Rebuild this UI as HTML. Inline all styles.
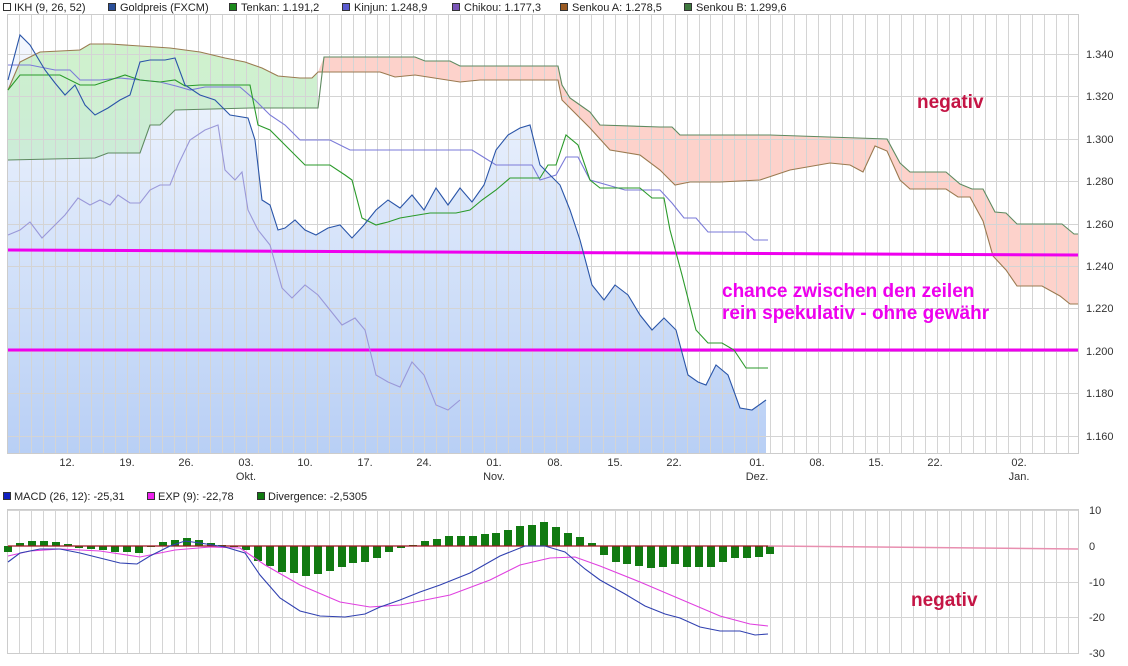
<!DOCTYPE html>
<html><head><meta charset="utf-8"><style>
html,body{margin:0;padding:0;background:#fff;}
svg{display:block;font-family:"Liberation Sans",sans-serif;}
</style></head><body>
<svg width="1128" height="666" viewBox="0 0 1128 666" xmlns="http://www.w3.org/2000/svg">
<defs>
<linearGradient id="bg" x1="0" y1="0" x2="0" y2="1" gradientUnits="userSpaceOnUse" x1a="0">
</linearGradient>
<linearGradient id="blu" gradientUnits="userSpaceOnUse" x1="0" y1="40" x2="0" y2="453">
<stop offset="0" stop-color="#f3f7fe"/><stop offset="1" stop-color="#b8cff5"/></linearGradient>
<linearGradient id="grn" gradientUnits="userSpaceOnUse" x1="0" y1="40" x2="0" y2="160">
<stop offset="0" stop-color="#c6efc2"/><stop offset="1" stop-color="#c8ecd2"/></linearGradient>
</defs>
<!-- top legend -->
<g font-size="11" fill="#222">
<rect x="3.5" y="3.5" width="7" height="7" fill="#fff" stroke="#333"/><text x="14" y="11">IKH (9, 26, 52)</text>
<rect x="108.5" y="3.5" width="7" height="7" fill="#2a4f9a" stroke="#333"/><text x="120" y="11">Goldpreis (FXCM)</text>
<rect x="229.5" y="3.5" width="7" height="7" fill="#1b8a1b" stroke="#333"/><text x="241" y="11">Tenkan: 1.191,2</text>
<rect x="342.5" y="3.5" width="7" height="7" fill="#5b5bd0" stroke="#333"/><text x="354" y="11">Kinjun: 1.248,9</text>
<rect x="452.5" y="3.5" width="7" height="7" fill="#7a55b8" stroke="#333"/><text x="464" y="11">Chikou: 1.177,3</text>
<rect x="560.5" y="3.5" width="7" height="7" fill="#9a5a22" stroke="#333"/><text x="572" y="11">Senkou A: 1.278,5</text>
<rect x="684.5" y="3.5" width="7" height="7" fill="#3f7a3f" stroke="#333"/><text x="696" y="11">Senkou B: 1.299,6</text>
</g>
<!-- price fill -->
<polygon fill="url(#blu)" points="8,80 20,35 30,45 45,70 55,83 65,95 75,85 85,105 95,115 108,108 120,100 130,95 140,62 150,60 165,60 175,58 185,85 200,95 215,100 230,115 248,118 255,140 262,200 270,205 278,230 285,228 295,220 305,230 316,235 328,228 340,225 352,238 364,225 376,210 388,200 400,208 412,195 424,210 436,188 448,205 460,188 472,202 484,185 496,150 508,135 520,128 530,125 540,165 550,175 560,185 570,210 580,240 592,285 604,300 615,285 628,295 640,315 652,330 664,318 676,330 688,375 698,382 706,385 716,365 728,375 740,408 752,410 766,400 766,453 8,453"/>
<!-- green cloud -->
<polygon fill="url(#grn)" fill-opacity="0.85" points="8,90 20,62 40,52 80,50 90,44 110,44 140,46 170,48 200,52 225,58 245,62 262,68 278,76 300,78 312,78 318,72 318,108 250,108 175,110 160,125 150,125 140,153 108,153 95,158 8,160"/>
<!-- red cloud -->
<polygon fill="#fdd2cb" points="318,72 324,57 415,57 425,61 450,61 460,66 558,66 562,85 570,98 580,105 590,112 600,125 660,127 672,127 680,135 770,135 887,139 900,163 910,172 946,172 960,184 972,189 983,189 995,212 1006,213 1017,224 1062,224 1074,234 1078,234 1078,304 1070,304 1060,296 1042,286 1017,286 1006,270 993,256 983,221 970,197 958,197 946,189 910,189 900,180 887,151 875,146 863,172 850,165 830,163 790,170 760,180 720,182 690,182 675,185 660,170 640,155 610,150 590,128 570,108 562,100 558,80 480,80 460,82 415,75 395,77 380,72"/>
<!-- grid -->
<g stroke="#d4d4d4" stroke-width="1">
<path d="M19.5 15V453M31.5 15V453M43.5 15V453M55.5 15V453M67.5 15V453M79.5 15V453M91.5 15V453M103.5 15V453M115.5 15V453M127.5 15V453M139.5 15V453M150.5 15V453M162.5 15V453M174.5 15V453M186.5 15V453M198.5 15V453M210.5 15V453M222.5 15V453M234.5 15V453M246.5 15V453M258.5 15V453M270.5 15V453M282.5 15V453M293.5 15V453M305.5 15V453M317.5 15V453M329.5 15V453M341.5 15V453M353.5 15V453M365.5 15V453M377.5 15V453M389.5 15V453M401.5 15V453M413.5 15V453M424.5 15V453M436.5 15V453M448.5 15V453M460.5 15V453M472.5 15V453M484.5 15V453M496.5 15V453M508.5 15V453M520.5 15V453M532.5 15V453M544.5 15V453M556.5 15V453M567.5 15V453M579.5 15V453M591.5 15V453M603.5 15V453M615.5 15V453M627.5 15V453M639.5 15V453M651.5 15V453M663.5 15V453M675.5 15V453M687.5 15V453M699.5 15V453M710.5 15V453M722.5 15V453M734.5 15V453M746.5 15V453M758.5 15V453M770.5 15V453M782.5 15V453M794.5 15V453M806.5 15V453M818.5 15V453M830.5 15V453M842.5 15V453M853.5 15V453M865.5 15V453M877.5 15V453M889.5 15V453M901.5 15V453M913.5 15V453M925.5 15V453M937.5 15V453M949.5 15V453M961.5 15V453M973.5 15V453M985.5 15V453M996.5 15V453M1008.5 15V453M1020.5 15V453M1032.5 15V453M1044.5 15V453M1056.5 15V453M1068.5 15V453"/>
<path d="M8 54.5H1078M8 96.5H1078M8 139.5H1078M8 181.5H1078M8 224.5H1078M8 266.5H1078M8 308.5H1078M8 351.5H1078M8 393.5H1078M8 436.5H1078"/>
<path d="M19.5 510V653M31.5 510V653M43.5 510V653M55.5 510V653M67.5 510V653M79.5 510V653M91.5 510V653M103.5 510V653M115.5 510V653M127.5 510V653M139.5 510V653M150.5 510V653M162.5 510V653M174.5 510V653M186.5 510V653M198.5 510V653M210.5 510V653M222.5 510V653M234.5 510V653M246.5 510V653M258.5 510V653M270.5 510V653M282.5 510V653M293.5 510V653M305.5 510V653M317.5 510V653M329.5 510V653M341.5 510V653M353.5 510V653M365.5 510V653M377.5 510V653M389.5 510V653M401.5 510V653M413.5 510V653M424.5 510V653M436.5 510V653M448.5 510V653M460.5 510V653M472.5 510V653M484.5 510V653M496.5 510V653M508.5 510V653M520.5 510V653M532.5 510V653M544.5 510V653M556.5 510V653M567.5 510V653M579.5 510V653M591.5 510V653M603.5 510V653M615.5 510V653M627.5 510V653M639.5 510V653M651.5 510V653M663.5 510V653M675.5 510V653M687.5 510V653M699.5 510V653M710.5 510V653M722.5 510V653M734.5 510V653M746.5 510V653M758.5 510V653M770.5 510V653M782.5 510V653M794.5 510V653M806.5 510V653M818.5 510V653M830.5 510V653M842.5 510V653M853.5 510V653M865.5 510V653M877.5 510V653M889.5 510V653M901.5 510V653M913.5 510V653M925.5 510V653M937.5 510V653M949.5 510V653M961.5 510V653M973.5 510V653M985.5 510V653M996.5 510V653M1008.5 510V653M1020.5 510V653M1032.5 510V653M1044.5 510V653M1056.5 510V653M1068.5 510V653"/>
<path d="M8 510.5H1078M8 582.5H1078M8 617.5H1078"/>
</g>
<rect x="7.5" y="14.5" width="1071" height="439" fill="none" stroke="#ccc"/>
<rect x="7.5" y="509.5" width="1071" height="144" fill="none" stroke="#ccc"/>
<!-- cloud outlines -->
<g fill="none" stroke-width="1.1">
<polyline stroke="#9a7a50" points="8,90 20,62 40,52 80,50 90,44 110,44 140,46 170,48 200,52 225,58 245,62 262,68 278,76 300,78 312,78 318,72 380,72 395,77 415,75 460,82 480,80 558,80 562,100 570,108 590,128 610,150 640,155 660,170 675,185 690,182 720,182 760,180 790,170 830,163 850,165 863,172 875,146 887,151 900,180 910,189 946,189 958,197 970,197 983,221 993,256 1006,270 1017,286 1042,286 1060,296 1070,304 1078,304"/>
<polyline stroke="#5e8a60" points="8,160 95,158 108,153 140,153 150,125 160,125 175,110 250,108 318,108 324,57 415,57 425,61 450,61 460,66 558,66 562,85 570,98 580,105 590,112 600,125 660,127 672,127 680,135 770,135 887,139 900,163 910,172 946,172 960,184 972,189 983,189 995,212 1006,213 1017,224 1062,224 1074,234 1078,234"/>
</g>
<!-- magenta lines -->
<line x1="8" y1="250" x2="1078" y2="255" stroke="#ee00ee" stroke-width="3"/>
<line x1="8" y1="350" x2="1078" y2="350" stroke="#ee00ee" stroke-width="3"/>
<!-- series -->
<g fill="none" stroke-width="1.1">
<polyline stroke="#9a98d8" points="8,235 20,230 30,222 42,238 55,225 65,215 78,198 90,205 100,200 110,205 118,195 130,203 140,203 150,190 160,185 170,185 178,165 190,140 205,130 218,125 225,170 235,180 242,172 248,210 258,230 270,245 282,288 292,298 305,285 318,295 330,310 342,325 355,318 365,330 376,375 388,382 400,387 412,362 424,375 436,405 448,410 460,400"/>
<polyline stroke="#7a7ad8" points="8,65 30,65 55,70 70,70 80,80 100,80 120,78 140,80 160,82 176,86 190,90 205,87 240,87 255,100 270,115 285,125 300,140 330,140 340,145 350,150 472,150 480,155 496,165 532,165 540,180 556,175 566,157 578,157 590,180 625,190 660,190 672,203 684,218 696,218 708,232 745,232 754,240 768,240"/>
<polyline stroke="#2a9a2a" points="8,90 20,75 60,75 80,85 95,85 110,80 125,75 140,80 160,82 175,80 185,86 200,85 250,85 258,125 270,130 290,150 305,165 330,165 345,175 352,180 362,218 376,225 388,222 400,218 430,213 456,213 470,210 482,200 496,190 510,178 540,178 548,165 556,165 566,135 578,145 590,180 600,188 640,188 652,198 664,198 670,230 682,275 696,330 708,343 722,343 734,350 746,368 768,368"/>
<polyline stroke="#2a55a8" points="8,80 20,35 30,45 45,70 55,83 65,95 75,85 85,105 95,115 108,108 120,100 130,95 140,62 150,60 165,60 175,58 185,85 200,95 215,100 230,115 248,118 255,140 262,200 270,205 278,230 285,228 295,220 305,230 316,235 328,228 340,225 352,238 364,225 376,210 388,200 400,208 412,195 424,210 436,188 448,205 460,188 472,202 484,185 496,150 508,135 520,128 530,125 540,165 550,175 560,185 570,210 580,240 592,285 604,300 615,285 628,295 640,315 652,330 664,318 676,330 688,375 698,382 706,385 716,365 728,375 740,408 752,410 766,400"/>
</g>
<!-- y labels -->
<g font-size="11" fill="#333">
<text x="1086" y="58">1.340</text><text x="1086" y="100">1.320</text><text x="1086" y="143">1.300</text><text x="1086" y="185">1.280</text><text x="1086" y="228">1.260</text><text x="1086" y="270">1.240</text><text x="1086" y="312">1.220</text><text x="1086" y="355">1.200</text><text x="1086" y="397">1.180</text><text x="1086" y="440">1.160</text>
<text x="1089" y="514">10</text><text x="1089" y="550">0</text><text x="1089" y="586">-10</text><text x="1089" y="621">-20</text><text x="1089" y="657">-30</text>
</g>
<g font-size="11" fill="#333" text-anchor="middle">
<text x="67" y="466">12.</text><text x="127" y="466">19.</text><text x="186" y="466">26.</text><text x="246" y="466">03.</text><text x="246" y="480">Okt.</text><text x="305" y="466">10.</text><text x="365" y="466">17.</text><text x="424" y="466">24.</text><text x="494" y="466">01.</text><text x="494" y="480">Nov.</text><text x="555" y="466">08.</text><text x="615" y="466">15.</text><text x="674" y="466">22.</text><text x="757" y="466">01.</text><text x="757" y="480">Dez.</text><text x="817" y="466">08.</text><text x="876" y="466">15.</text><text x="935" y="466">22.</text><text x="1019" y="466">02.</text><text x="1019" y="480">Jan.</text>
</g>
<!-- annotations -->
<g font-weight="bold" font-size="19">
<text x="917" y="108" fill="#c41545">negativ</text>
<text x="911" y="606" fill="#c41545">negativ</text>
<text x="722" y="297" fill="#ee00ee">chance zwischen den zeilen</text>
<text x="722" y="319" fill="#ee00ee">rein spekulativ - ohne gewähr</text>
</g>
<!-- lower legend -->
<g font-size="11" fill="#222">
<rect x="3.5" y="492.5" width="7" height="7" fill="#1020c0" stroke="#333"/><text x="14" y="500">MACD (26, 12): -25,31</text>
<rect x="147.5" y="492.5" width="7" height="7" fill="#ee22ee" stroke="#333"/><text x="158" y="500">EXP (9): -22,78</text>
<rect x="257.5" y="492.5" width="7" height="7" fill="#107a10" stroke="#333"/><text x="268" y="500">Divergence: -2,5305</text>
</g>
<!-- bars -->
<g fill="#117a11">
<rect x="4" y="546" width="8" height="6"/><rect x="16" y="543" width="8" height="3"/><rect x="28" y="541" width="8" height="5"/><rect x="40" y="541" width="8" height="5"/><rect x="52" y="542" width="8" height="4"/><rect x="64" y="544" width="8" height="2"/><rect x="75" y="546" width="8" height="2"/><rect x="87" y="546" width="8" height="3"/><rect x="99" y="546" width="8" height="4"/><rect x="111" y="546" width="8" height="6"/><rect x="123" y="546" width="8" height="6"/><rect x="135" y="546" width="8" height="7"/><rect x="147" y="546" width="8" height="1"/><rect x="159" y="542" width="8" height="4"/><rect x="171" y="540" width="8" height="6"/><rect x="183" y="538" width="8" height="8"/><rect x="195" y="540" width="8" height="6"/><rect x="207" y="543" width="8" height="3"/><rect x="218" y="545" width="8" height="1"/><rect x="230" y="546" width="8" height="1"/><rect x="242" y="546" width="8" height="4"/><rect x="254" y="546" width="8" height="15"/><rect x="266" y="546" width="8" height="20"/><rect x="278" y="546" width="8" height="26"/><rect x="290" y="546" width="8" height="27"/><rect x="302" y="546" width="8" height="30"/><rect x="314" y="546" width="8" height="28"/><rect x="326" y="546" width="8" height="25"/><rect x="338" y="546" width="8" height="21"/><rect x="349" y="546" width="8" height="17"/><rect x="361" y="546" width="8" height="16"/><rect x="373" y="546" width="8" height="12"/><rect x="385" y="546" width="8" height="6"/><rect x="397" y="546" width="8" height="2"/><rect x="409" y="545" width="8" height="1"/><rect x="421" y="541" width="8" height="5"/><rect x="433" y="539" width="8" height="7"/><rect x="445" y="536" width="8" height="10"/><rect x="457" y="536" width="8" height="10"/><rect x="469" y="536" width="8" height="10"/><rect x="481" y="534" width="8" height="12"/><rect x="492" y="533" width="8" height="13"/><rect x="504" y="530" width="8" height="16"/><rect x="516" y="526" width="8" height="20"/><rect x="528" y="525" width="8" height="21"/><rect x="540" y="522" width="8" height="24"/><rect x="552" y="527" width="8" height="19"/><rect x="564" y="533" width="8" height="13"/><rect x="576" y="537" width="8" height="9"/><rect x="588" y="543" width="8" height="3"/><rect x="600" y="546" width="8" height="9"/><rect x="612" y="546" width="8" height="16"/><rect x="623" y="546" width="8" height="18"/><rect x="635" y="546" width="8" height="20"/><rect x="647" y="546" width="8" height="22"/><rect x="659" y="546" width="8" height="21"/><rect x="671" y="546" width="8" height="18"/><rect x="683" y="546" width="8" height="21"/><rect x="695" y="546" width="8" height="21"/><rect x="707" y="546" width="8" height="21"/><rect x="719" y="546" width="8" height="16"/><rect x="731" y="546" width="8" height="12"/><rect x="743" y="546" width="8" height="12"/><rect x="755" y="546" width="8" height="11"/><rect x="766" y="546" width="8" height="8"/>
</g>
<line x1="8" y1="546" x2="768" y2="546" stroke="#a01020" stroke-width="1.2"/>
<line x1="768" y1="546" x2="1078" y2="549" stroke="#e88fb0" stroke-width="1.5"/>
<g fill="none" stroke-width="1.1">
<polyline stroke="#e040e0" points="8,556 30,551 60,549 100,551 140,557 175,550 210,547 240,548 265,565 300,585 340,602 370,607 400,605 450,595 490,580 520,565 550,558 575,557 600,566 640,582 680,599 720,616 750,624 768,626"/>
<polyline stroke="#3040b0" points="8,562 20,553 40,549 60,549 80,553 100,558 120,563 137,564 150,556 170,546 185,541 200,543 225,547 245,553 260,575 280,598 300,611 320,616 345,617 365,614 380,607 400,600 420,592 440,585 470,573 500,556 525,546 545,546 565,552 585,569 600,580 625,594 645,606 665,614 680,618 700,627 720,631 740,631 755,635 768,634"/>
</g>
</svg>
</body></html>
